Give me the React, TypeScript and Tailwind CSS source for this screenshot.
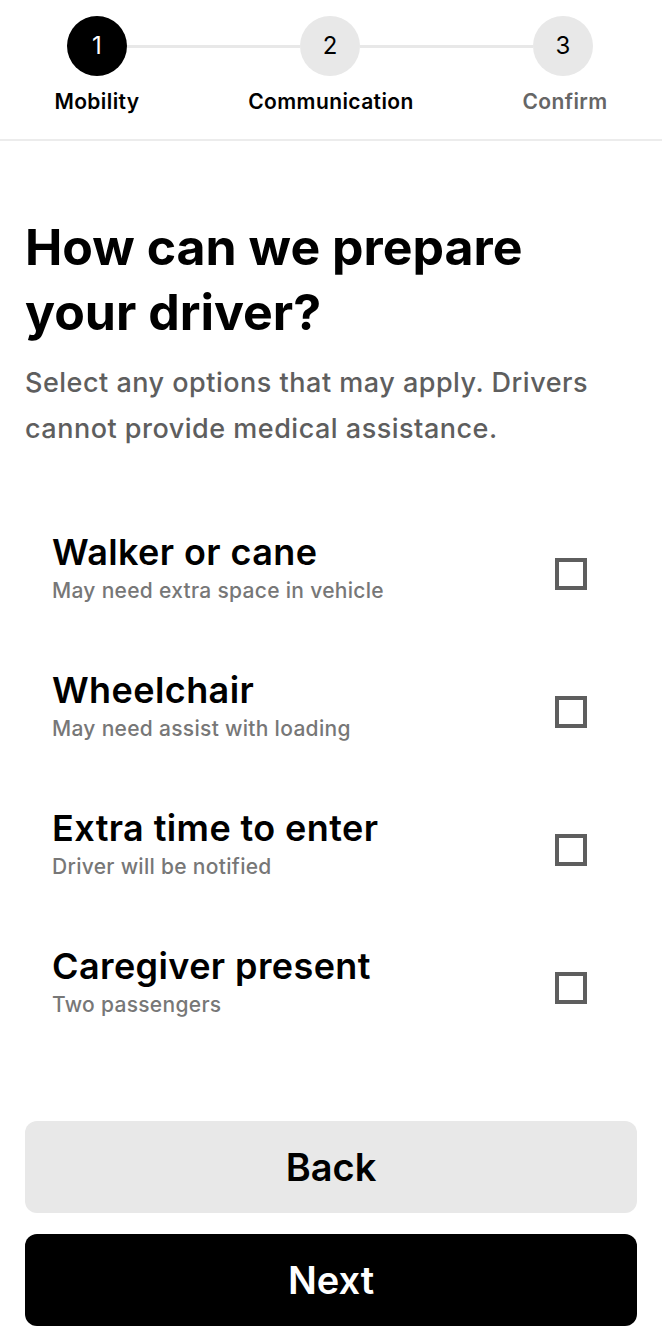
import React from "react";

const steps = [
  { n: 1, label: "Mobility", active: true },
  { n: 2, label: "Communication", active: false },
  { n: 3, label: "Confirm", active: false },
];

const options = [
  { title: "Walker or cane", sub: "May need extra space in vehicle" },
  { title: "Wheelchair", sub: "May need assist with loading" },
  { title: "Extra time to enter", sub: "Driver will be notified" },
  { title: "Caregiver present", sub: "Two passengers" },
];

const Circle = ({ n, active }: { n: number; active: boolean }) => (
  <div
    className={`flex h-[60px] w-[60px] shrink-0 items-center justify-center rounded-full text-[24px] ${
      active ? "bg-black text-white" : "bg-[#e8e8e8] text-black"
    }`}
  >
    {n}
  </div>
);

const App = () => {
  return (
    <div
      className="min-h-[1337px] w-full bg-white text-black"
      style={{ fontFamily: "Inter, 'Liberation Sans', sans-serif" }}
    >
      <header className="h-[141px] border-b-2 border-[#ececec] pt-4">
        <div className="flex items-center pl-[67px] pr-[69px]">
          <Circle n={1} active />
          <div className="h-[3px] flex-1 bg-[#e8e8e8]" />
          <Circle n={2} active={false} />
          <div className="h-[3px] flex-1 bg-[#e8e8e8]" />
          <Circle n={3} active={false} />
        </div>
        <div className="mt-[14px] flex justify-between">
          {steps.map((s) => (
            <div
              key={s.n}
              className={`w-[194px] text-center text-[21px] font-semibold leading-6 tracking-[0.4px] ${
                s.n === 3 ? "text-[#666666]" : "text-black"
              }`}
            >
              {s.label}
            </div>
          ))}
        </div>
      </header>

      <main className="px-[25px] pt-[74px]">
        <h1 className="text-[50px] font-bold leading-[65px]">
          How can we prepare your driver?
        </h1>
        <p className="mt-[15px] text-[27px] font-medium leading-[46px] tracking-[0.5px] text-[#5e5e5e]">
          Select any options that may apply. Drivers cannot provide medical assistance.
        </p>

        <ul className="mt-[47px]">
          {options.map((o) => (
            <li key={o.title} className="flex items-center justify-between pl-[27px] pr-[50px] py-[32px]">
              <div>
                <div className="text-[36px] font-semibold leading-[42px] tracking-[0.4px]">{o.title}</div>
                <div className="mt-1 text-[21px] font-medium leading-[28px] tracking-[0.3px] text-[#777777]">
                  {o.sub}
                </div>
              </div>
              <div className="mt-3 h-[32px] w-[32px] border-[4px] border-[#5e5e5e] bg-white" />
            </li>
          ))}
        </ul>

        <div className="mt-[70px] flex flex-col gap-[21px]">
          <button className="h-[92px] w-full rounded-xl bg-[#e8e8e8] text-[38px] font-semibold text-black">
            Back
          </button>
          <button className="h-[92px] w-full rounded-xl bg-black text-[38px] font-semibold text-white">
            Next
          </button>
        </div>
      </main>
    </div>
  );
};

export default App;
